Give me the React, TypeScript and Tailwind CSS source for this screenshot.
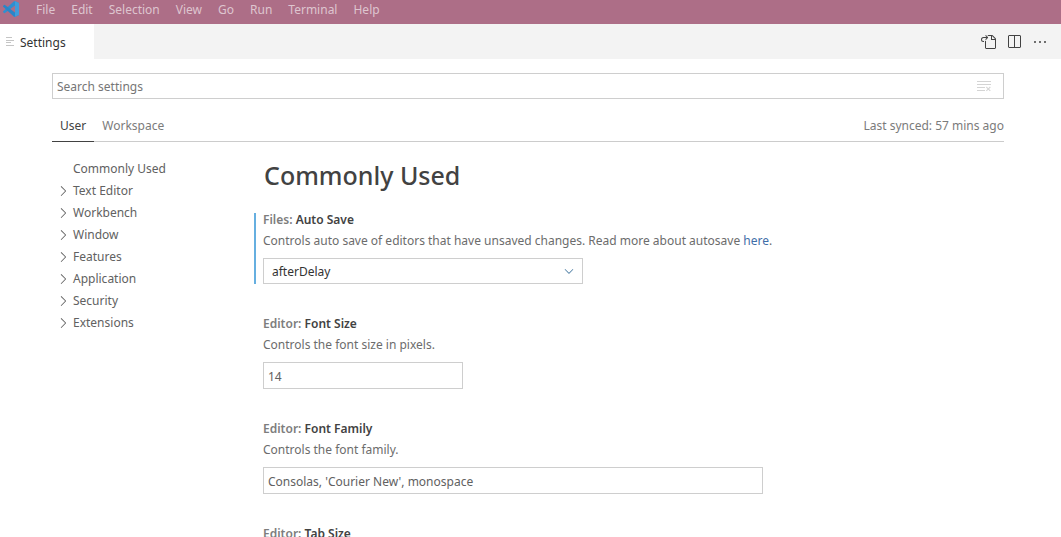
import type { ReactNode } from 'react';
import {
  VscChevronDown,
  VscChevronRight,
  VscClearAll,
  VscEllipsis,
  VscGoToFile,
  VscSplitHorizontal,
} from 'react-icons/vsc';

const menus = ['File', 'Edit', 'Selection', 'View', 'Go', 'Run', 'Terminal', 'Help'];
const sections = ['Text Editor', 'Workbench', 'Window', 'Features', 'Application', 'Security', 'Extensions'];

function Logo() {
  return (
    <svg viewBox="0 0 100 100" className="size-4 shrink-0" aria-hidden="true">
      <path
        fill="#2f8fd0"
        d="M96.5 10.8 75.9.9a6.2 6.2 0 0 0-7.1 1.2L1.3 63.6a4.2 4.2 0 0 0 0 6.2l5.5 5a4.2 4.2 0 0 0 5.3.2l81.2-61.6c2.7-2.1 6.7-.1 6.7 3.3v-.3c0-2.4-1.4-4.5-3.5-5.6Z"
      />
      <path
        fill="#2a86c8"
        d="m96.5 89.2-20.6 9.9a6.2 6.2 0 0 1-7.1-1.2L1.3 36.4a4.2 4.2 0 0 1 0-6.2l5.5-5a4.2 4.2 0 0 1 5.3-.2l81.2 61.6c2.7 2.1 6.7.1 6.7-3.3v.3c0 2.4-1.4 4.5-3.5 5.6Z"
      />
      <path
        fill="#419cda"
        d="M75.9 99.1a6.2 6.2 0 0 1-7.1-1.2c2.3 2.3 6.2.7 6.2-2.6V4.7c0-3.3-3.9-4.9-6.2-2.6A6.2 6.2 0 0 1 75.9.9l20.6 9.9A6.2 6.2 0 0 1 100 16.4v67.2c0 2.4-1.4 4.6-3.5 5.6Z"
      />
    </svg>
  );
}

function PageIcon() {
  return (
    <svg viewBox="0 0 10 10" className="size-[10px] shrink-0" stroke="#c5c5c5" aria-hidden="true">
      <path d="M1 .5h6M1 3.5h8M1 5.5h5M1 8.5h8" />
    </svg>
  );
}

type SettingProps = {
  category: string;
  name: string;
  id: string;
  description?: ReactNode;
  modified?: boolean;
  children?: ReactNode;
};

function Setting({ category, name, id, description, modified, children }: SettingProps) {
  return (
    <div className={`border-l-2 pl-[7px] ${modified ? 'border-[#66afe0]' : 'border-transparent'}`}>
      <label htmlFor={id} className="block text-[12px] leading-[14px] font-semibold text-[#424242]">
        <span className="text-[#7d7d7d]">{category}:</span> {name}
      </label>
      <p className="mt-1 mb-[7px] leading-5 text-[#6c6c6c]">{description}</p>
      {children}
    </div>
  );
}

export default function App() {
  return (
    <div className="flex h-screen flex-col overflow-hidden bg-white font-['Noto_Sans','Open_Sans',sans-serif] text-[12px] text-[#616161]">
      <header className="flex h-6 shrink-0 items-start bg-[#ad6e87] pl-[3px]">
        <div className="pt-px">
          <Logo />
        </div>
        <nav className="ml-[9px] flex text-[#dec5cf]">
          {menus.map((menu) => (
            <button key={menu} className="px-2 leading-5">
              {menu}
            </button>
          ))}
        </nav>
      </header>

      <div className="flex h-[35px] shrink-0 items-center justify-between bg-[#f3f3f3]">
        <div className="flex h-full w-[94px] items-center gap-[5px] bg-white pl-[5px] text-[#333333]">
          <PageIcon />
          <span className="pt-[2px]">Settings</span>
        </div>
        <div className="flex items-center gap-[10px] pr-[13px] text-[#424242]">
          <button aria-label="Open Settings (JSON)"><VscGoToFile size={16} /></button>
          <button aria-label="Split Editor Right"><VscSplitHorizontal size={16} /></button>
          <button aria-label="More Actions"><VscEllipsis size={16} /></button>
        </div>
      </div>

      <main className="flex min-h-0 flex-1 flex-col pt-[14px] pr-[57px] pl-[52px]">
        <div className="flex h-[26px] shrink-0 items-center border border-[#cecece] pr-[11px]">
          <input
            type="text"
            aria-label="Search settings"
            placeholder="Search settings"
            className="h-full min-w-0 flex-1 px-1 outline-none placeholder:text-[#767676]"
          />
          <button aria-label="Clear Settings Search Input" className="text-[#d4d4d4]"><VscClearAll size={16} /></button>
        </div>

        <div className="mt-[10px] flex h-[33px] shrink-0 items-stretch justify-between border-b border-[#cccccc]">
          <div className="-mb-px flex">
            <button className="border-b border-[#424242] px-2 pt-px text-[#424242]">User</button>
            <button className="px-2 text-[#7b7b7b]">Workspace</button>
          </div>
          <span className="self-center pt-px text-[#7b7b7b]">Last synced: 57 mins ago</span>
        </div>

        <div className="flex min-h-0 flex-1 pt-4">
          <nav className="w-[202px] shrink-0 pl-[3px]" aria-label="Settings sections">
            <button className="block h-[22px] pl-[18px]">Commonly Used</button>
            {sections.map((section) => (
              <button key={section} className="flex h-[22px] items-center gap-[2px]">
                <VscChevronRight size={16} />
                {section}
              </button>
            ))}
          </nav>

          <div className="min-w-0 flex-1">
            <h1 className="mb-[21px] pl-[10px] text-[25px] leading-[34px] font-medium text-[#424242]">Commonly Used</h1>
            <div className="flex flex-col gap-[33px]">
              <Setting
                category="Files"
                name="Auto Save"
                id="auto-save"
                modified
                description={
                  <>
                    Controls auto save of editors that have unsaved changes. Read more about autosave{' '}
                    <a href="#autosave" className="text-[#3f6ea8]">here</a>.
                  </>
                }
              >
                <div className="grid w-80 max-w-full items-center">
                  <select
                    id="auto-save"
                    defaultValue="afterDelay"
                    className="col-start-1 row-start-1 h-[26px] appearance-none border border-[#cecece] bg-white px-2 pt-px text-[#333333]"
                  >
                    <option>off</option>
                    <option>afterDelay</option>
                    <option>onFocusChange</option>
                    <option>onWindowChange</option>
                  </select>
                  <VscChevronDown size={14} className="pointer-events-none col-start-1 row-start-1 mr-[7px] justify-self-end text-[#4f7fa5]" />
                </div>
              </Setting>
              <Setting category="Editor" name="Font Size" id="font-size" description="Controls the font size in pixels.">
                <input id="font-size" type="text" defaultValue="14" className="block h-[27px] w-[200px] border border-[#cecece] px-1 pt-[2px]" />
              </Setting>
              <Setting category="Editor" name="Font Family" id="font-family" description="Controls the font family.">
                <input
                  id="font-family"
                  type="text"
                  defaultValue="Consolas, 'Courier New', monospace"
                  className="block h-[27px] w-[500px] max-w-full border border-[#cecece] px-1 pt-[2px]"
                />
              </Setting>
              <Setting category="Editor" name="Tab Size" id="tab-size" description="The number of spaces a tab is equal to.">
                <input id="tab-size" type="text" defaultValue="4" className="block h-[27px] w-[200px] border border-[#cecece] px-1 pt-[2px]" />
              </Setting>
            </div>
          </div>
        </div>
      </main>
    </div>
  );
}
